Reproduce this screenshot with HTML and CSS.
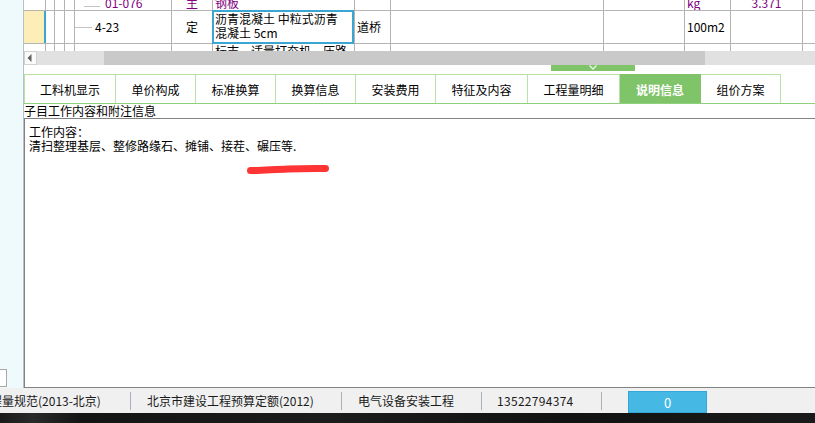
FILE: index.html
```html
<!DOCTYPE html>
<html lang="zh-CN">
<head>
<meta charset="utf-8">
<title>说明信息</title>
<link rel="stylesheet" href="styles.css">
</head>
<body>
<div class="main">
  <aside class="side"><div class="side-box"></div></aside>
  <section class="content">
    <div class="grid-wrap">
      <div class="row r1">
        <div class="c w1"></div><div class="c w2"></div><div class="c w3"></div><div class="c w4"></div>
        <div class="c w5 purple"><span class="tree deep"></span>01-076</div>
        <div class="c w6 purple center">主</div>
        <div class="c w7 purple pad">钢板</div>
        <div class="c w8"></div><div class="c w9"></div><div class="c w10"></div>
        <div class="c w11 purple pad">kg</div>
        <div class="c w12 purple center">3.371</div>
        <div class="c w13"></div>
      </div>
      <div class="row r2">
        <div class="c w1 cur"></div><div class="c w2"></div><div class="c w3"></div><div class="c w4"></div>
        <div class="c w5"><span class="tree"></span>4-23</div>
        <div class="c w6 center">定</div>
        <div class="c w7 pad sel"><div class="multi">沥青混凝土 中粒式沥青<br>混凝土 5cm</div></div>
        <div class="c w8 pad">道桥</div>
        <div class="c w9"></div><div class="c w10"></div>
        <div class="c w11 pad">100m2</div>
        <div class="c w12"></div>
        <div class="c w13"></div>
      </div>
      <div class="row r3">
        <div class="c w1"></div><div class="c w2"></div><div class="c w3"></div><div class="c w4"></div>
        <div class="c w5"></div><div class="c w6"></div>
        <div class="c w7 pad">标志、适量打夯机、压路</div>
        <div class="c w8"></div><div class="c w9"></div><div class="c w10"></div>
        <div class="c w11"></div><div class="c w12"></div><div class="c w13"></div>
      </div>
    </div>
    <div class="hscroll">
      <div class="hs-btn"><svg width="5" height="8" viewBox="0 0 5 8"><path d="M4.5 0 L0.5 4 L4.5 8 Z" fill="#606060"/></svg></div>
      <div class="hs-track"><div class="hs-thumb"></div></div>
    </div>
    <div class="splitter">
      <div class="handle"><svg width="84" height="6" viewBox="0 0 84 6"><path d="M38.5 0.5 L42 4 L45.5 0.5" fill="none" stroke="#e8f5e2" stroke-width="1.4"/></svg></div>
    </div>
    <div class="tabs">
      <div class="tab t92">工料机显示</div>
      <div class="tab t80">单价构成</div>
      <div class="tab t80">标准换算</div>
      <div class="tab t80">换算信息</div>
      <div class="tab t80">安装费用</div>
      <div class="tab t92">特征及内容</div>
      <div class="tab t92">工程量明细</div>
      <div class="tab t81 active">说明信息</div>
      <div class="tab t80">组价方案</div>
    </div>
    <div class="label">子目工作内容和附注信息</div>
    <div class="textbox">工作内容：<br>清扫整理基层、整修路缘石、摊铺、接茬、碾压等.</div>
  </section>
</div>
<div class="status">
  <div class="st s1"><span class="cut">程量规范(2013-北京)</span></div>
  <div class="sep"></div>
  <div class="st s2">北京市建设工程预算定额(2012)</div>
  <div class="sep"></div>
  <div class="st s3">电气设备安装工程</div>
  <div class="sep"></div>
  <div class="st s4">13522794374</div>
  <div class="sep"></div>
  <div class="st-btn">0</div>
</div>
<div class="taskbar"></div>
<svg class="scribble" width="92" height="16" viewBox="0 0 92 16"><path d="M7.5 9.6 C 20 9.6, 30 8.4, 45 7.9 S 70 7.5, 82.5 7.4" fill="none" stroke="#ff3535" stroke-width="7" stroke-linecap="round"/></svg>
</body>
</html>
```
FILE: styles.css
```css
* { box-sizing: border-box; }
html, body { margin: 0; padding: 0; }
body {
  width: 815px;
  height: 423px;
  overflow: hidden;
  position: relative;
  background: #fff;
  color: #000;
  font-family: "Noto Sans CJK SC", "Noto Sans", sans-serif;
  font-size: 12px;
}

.main { display: flex; height: 388px; }

.side {
  width: 24px;
  flex: none;
  background: #effafc;
  border-right: 1px solid #b8c2c6;
  display: flex;
  flex-direction: column;
  justify-content: flex-end;
  padding-bottom: 1px;
}
.side-box {
  width: 7px;
  height: 18px;
  background: #fff;
  border: 1px solid #a8a8a8;
  border-left: none;
}

.content { flex: 1; min-width: 0; display: flex; flex-direction: column; }

/* grid */
.grid-wrap { height: 51px; overflow: hidden; flex: none; }
.row { display: flex; border-bottom: 1px solid #b4b4b4; }
.r1 { height: 11px; }
.r2 { height: 33px; }
.r3 { height: 33px; }
.c {
  flex: none;
  border-right: 1px solid #b4b4b4;
  display: flex;
  align-items: center;
  line-height: 14px;
  white-space: nowrap;
  overflow: hidden;
}
.r1 .c { align-items: flex-end; }
.r3 .c { align-items: flex-start; }
.w1 { width: 22px; }
.w2 { width: 9px; }
.w3 { width: 10px; }
.w4 { width: 10px; }
.w5 { width: 97px; }
.w6 { width: 41px; }
.w7 { width: 142px; }
.w8 { width: 36px; }
.w9 { width: 213px; }
.w10 { width: 81px; }
.w11 { width: 46px; }
.w12 { width: 72px; }
.w13 { flex: 1; border-right: none; }
.pad { padding-left: 2px; }
.center { justify-content: center; }
.purple { color: #800080; }
.cur { background: #fdeeb8; border-right: 2px solid #3ba6d1; }
.tree {
  display: inline-block;
  width: 17px;
  height: 1px;
  background: #c4c4c4;
  margin-right: 3px;
}
.tree.deep { margin-left: 9px; width: 16px; margin-right: 5px; position: relative; top: -3px; }
.sel { position: relative; overflow: visible; }
.sel::after {
  content: "";
  position: absolute;
  left: -1px;
  top: -1px;
  right: 0;
  bottom: -1px;
  border: 2px solid #3ba6d1;
}
.multi { line-height: 14px; margin-top: -2px; }

/* horizontal scrollbar */
.hscroll { height: 14px; flex: none; display: flex; }
.hs-btn {
  width: 13px;
  background: #fafafa;
  border: 1px solid #d2d2d2;
  display: flex;
  align-items: center;
  justify-content: center;
  padding-right: 2px;
}
.hs-track { flex: 1; background: #e1e1e1; padding-left: 67px; }
.hs-thumb { width: 601px; height: 100%; background: #c9c9c9; }

/* splitter */
.splitter { height: 9px; flex: none; }
.handle { margin-left: 527px; width: 84px; height: 6px; background: #80c46a; }
.handle svg { display: block; }

/* tabs */
.tabs { height: 30px; flex: none; display: flex; border-bottom: 1px solid #8fd07c; }
.tab {
  height: 29px;
  flex: none;
  border-top: 1px solid #b7e4a6;
  border-right: 1px solid #b7e4a6;
  display: flex;
  align-items: center;
  justify-content: center;
  padding-top: 1px;
}
.tab:first-child { border-left: 1px solid #b7e4a6; }
.t92 { width: 92px; }
.t80 { width: 80px; }
.t81 { width: 81px; }
.tab.active {
  background: #80c46a;
  border-color: #80c46a;
  color: #fff;
  font-weight: bold;
}

.label { height: 14px; line-height: 14px; flex: none; white-space: nowrap; }

.textbox {
  height: 270px;
  flex: none;
  border: 1px solid #828282;
  border-right: none;
  padding: 6px 4px;
  line-height: 14px;
}

/* status bar */
.status {
  height: 25px;
  background: #f0f0f0;
  display: flex;
  align-items: center;
  color: #1a1a1a;
  white-space: nowrap;
}
.st { overflow: hidden; line-height: 16px; }
.s1 { width: 130px; }
.cut { margin-left: -10px; }
.s2 { width: 210px; padding-left: 16px; }
.s3 { width: 139px; padding-left: 16px; }
.s4 { width: 119px; padding-left: 15px; letter-spacing: 0.3px; }
.sep { width: 1px; height: 18px; background: #a9b1bc; flex: none; }
.st-btn {
  margin-left: 26px;
  width: 79px;
  height: 22px;
  margin-top: 3px;
  background: #45b9e3;
  border: 1px solid #35a7d6;
  color: #fff;
  display: flex;
  align-items: center;
  justify-content: center;
  font-size: 13px;
}

.taskbar {
  height: 10px;
  background: linear-gradient(90deg, #1a1a1a 0%, #2a2a2a 4%, #141414 10%, #1c1c1c 40%, #121212 70%, #1a1a1a 100%);
}

.scribble { position: absolute; left: 243px; top: 161px; }
```
